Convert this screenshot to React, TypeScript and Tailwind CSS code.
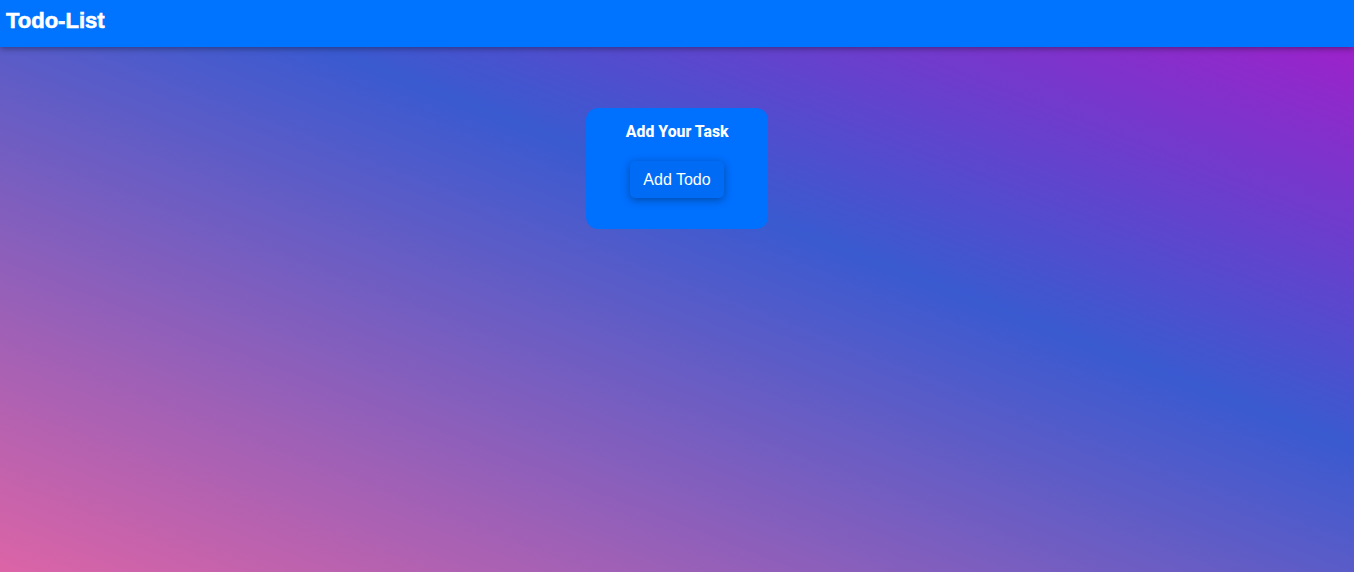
import React from "react";

export default function App() {
  return (
    <div className="min-h-screen flex flex-col">
      <header className="h-[47px] shrink-0 bg-[#0073ff] flex items-center px-[6px] shadow-[0_2px_6px_rgba(0,0,0,0.35)] relative z-10">
        <h1 className="text-white text-[22px] font-black font-['Liberation_Sans',Arial,sans-serif] leading-none -mt-[5px] [-webkit-text-stroke:0.6px_white]">
          Todo-List
        </h1>
      </header>
      <main className="flex-1 bg-[linear-gradient(to_top_right,#dc64a6,#3a5ad0_62%,#9c22ca)] flex flex-col items-center pt-[61px]">
        <div className="w-[182px] h-[121px] bg-[#0070ff] rounded-[12px] flex flex-col items-center pt-[12px]">
          <h2 className="text-white text-[17px] font-extrabold font-['Roboto',sans-serif] leading-[22px] scale-x-[0.93]">
            Add Your Task
          </h2>
          <button className="mt-[19px] h-[37px] px-[13px] rounded-[5px] bg-[#006cf5] text-white text-[16px] font-['Liberation_Sans',Arial,sans-serif] shadow-[0_2px_8px_rgba(0,0,0,0.35)]">
            Add Todo
          </button>
        </div>
      </main>
    </div>
  );
}
